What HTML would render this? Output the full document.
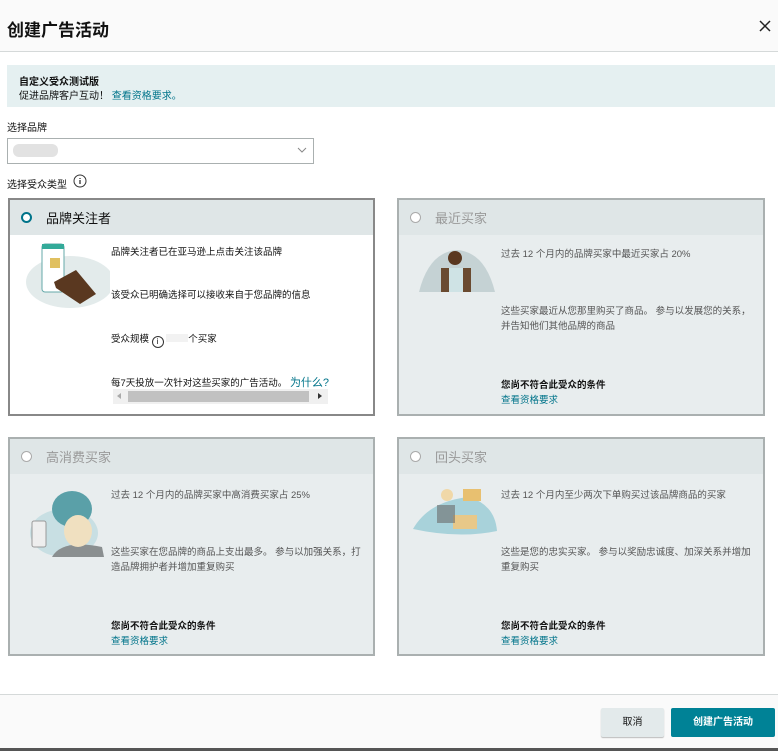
<!DOCTYPE html>
<html><head><meta charset="utf-8"><style>
*{margin:0;padding:0;box-sizing:border-box}
body{width:778px;height:751px;background:#fff;font-family:"Liberation Sans","Noto Sans CJK SC",sans-serif;color:#111;position:relative;overflow:hidden;font-size:10px}
.a{position:absolute;white-space:nowrap}
.hd{position:absolute;left:0;top:0;width:778px;height:52px;background:#fafafa;border-bottom:1px solid #d5d9d9}
.card{position:absolute;border:2px solid #aab0b0;background:#e8edee;font-size:9.5px}
.card .h{height:35px;background:#dfe6e7;position:relative}
.card .h .r{position:absolute;left:11px;top:12px;width:11px;height:11px;border:1px solid #aaa;border-radius:50%;background:#fff}
.card .h .t{position:absolute;left:36px;top:8px;font-size:13px;color:#999}
.lk{color:#00748a}
.b{font-weight:bold}
</style></head><body>
<div class="hd"></div>
<div class="a" style="left:7px;top:16px;font-size:17px;font-weight:bold;color:#111">创建广告活动</div>
<svg class="a" style="left:759px;top:20px" width="12" height="12"><path d="M1 1L11 11M11 1L1 11" stroke="#222" stroke-width="1.5"/></svg>
<div class="a" style="left:7px;top:65px;width:768px;height:42px;background:#e5f0f1"></div>
<div class="a b" style="left:19px;top:73px;font-size:10px">自定义受众测试版</div>
<div class="a" style="left:19px;top:87px;font-size:10px">促进品牌客户互动！ <span class="lk">查看资格要求。</span></div>
<div class="a" style="left:7px;top:119px;font-size:10px">选择品牌</div>
<div class="a" style="left:7px;top:138px;width:307px;height:26px;border:1px solid #aab0b0;background:#fff"></div>
<div class="a" style="left:13px;top:144px;width:45px;height:13px;background:#e2e2e2;border-radius:6px"></div>
<svg class="a" style="left:297px;top:147px" width="10" height="7"><path d="M1 1L5 5L9 1" stroke="#888" fill="none"/></svg>
<div class="a" style="left:7px;top:176px;font-size:10px">选择受众类型</div>
<svg class="a" style="left:73px;top:174px" width="14" height="14"><circle cx="7" cy="7" r="6" fill="none" stroke="#333"/><path d="M7 6v4M7 4v1" stroke="#333" stroke-width="1.3"/></svg>

<div class="card" style="left:8px;top:198px;width:367px;height:218px;background:#fff;border-color:#888">
<div class="h"><div class="r" style="border:2px solid #00748a"></div><div class="t" style="color:#111">品牌关注者</div></div>
<svg class="a" style="left:10px;top:40px" width="90" height="68"><ellipse cx="50" cy="42" rx="44" ry="26" fill="#e3ebeb"/><rect x="22" y="4" width="22" height="48" rx="3" fill="#fff" stroke="#6aa"/><rect x="22" y="4" width="22" height="5" fill="#3a9"/><rect x="30" y="18" width="10" height="10" fill="#e0c060"/><path d="M34 42L56 30L76 54L60 64L36 48Z" fill="#5a3820"/></svg>
<div class="a" style="left:101px;top:44px">品牌关注者已在亚马逊上点击关注该品牌</div>
<div class="a" style="left:101px;top:87px">该受众已明确选择可以接收来自于您品牌的信息</div>
<div class="a" style="left:101px;top:131px">受众规模 <span style="display:inline-block;width:12px;height:12px;border:1px solid #333;border-radius:50%;vertical-align:-2px;font-size:8px;text-align:center;line-height:10px">i</span> <span style="display:inline-block;width:22px;height:8px;background:#f2f2f2"></span>个买家</div>
<div class="a" style="left:101px;top:174px">每7天投放一次针对这些买家的广告活动。 <span class="lk" style="font-size:11px">为什么?</span></div>
<div class="a" style="left:103px;top:189px;width:215px;height:15px;background:#f0f0f0"></div>
<div class="a" style="left:118px;top:191px;width:181px;height:11px;background:#c1c1c1"></div>
<div class="a" style="left:107px;top:193px;width:0;height:0;border:3px solid transparent;border-right:4px solid #aaa;border-left:0"></div>
<div class="a" style="left:308px;top:193px;width:0;height:0;border:3px solid transparent;border-left:4px solid #333;border-right:0"></div>
</div>

<div class="card" style="left:397px;top:198px;width:368px;height:218px">
<div class="h"><div class="r"></div><div class="t">最近买家</div></div>
<svg class="a" style="left:10px;top:44px" width="90" height="50"><path d="M10 48Q20 8 48 6Q76 8 86 48Z" fill="#c5d2d4"/><circle cx="46" cy="14" r="7" fill="#5a3820"/><path d="M32 48L34 24L58 24L60 48Z" fill="#cfe3e5"/><rect x="32" y="24" width="8" height="24" fill="#6a4a30"/><rect x="54" y="24" width="8" height="24" fill="#6a4a30"/></svg>
<div class="a" style="left:102px;top:46px;color:#555">过去 12 个月内的品牌买家中最近买家占 20%</div>
<div class="a" style="left:102px;top:104px;color:#555;line-height:15px">这些买家最近从您那里购买了商品。 参与以发展您的关系，<br>并告知他们其他品牌的商品</div>
<div class="a b" style="left:102px;top:177px">您尚不符合此受众的条件</div>
<div class="a lk" style="left:102px;top:192px">查看资格要求</div>
</div>

<div class="card" style="left:8px;top:437px;width:367px;height:219px">
<div class="h"><div class="r"></div><div class="t">高消费买家</div></div>
<svg class="a" style="left:12px;top:44px" width="90" height="74"><ellipse cx="42" cy="50" rx="34" ry="24" fill="#c8dfe3"/><path d="M30 74Q40 56 80 64L82 74Z" fill="#8a8f90"/><ellipse cx="50" cy="26" rx="20" ry="18" fill="#5aa0a8"/><ellipse cx="56" cy="48" rx="14" ry="16" fill="#f0e0c0"/><rect x="10" y="38" width="14" height="26" rx="2" fill="#eee" stroke="#999"/></svg>
<div class="a" style="left:101px;top:48px;color:#555">过去 12 个月内的品牌买家中高消费买家占 25%</div>
<div class="a" style="left:101px;top:106px;color:#555;line-height:15px">这些买家在您品牌的商品上支出最多。 参与以加强关系，打<br>造品牌拥护者并增加重复购买</div>
<div class="a b" style="left:101px;top:179px">您尚不符合此受众的条件</div>
<div class="a lk" style="left:101px;top:194px">查看资格要求</div>
</div>

<div class="card" style="left:397px;top:437px;width:368px;height:219px">
<div class="h"><div class="r"></div><div class="t">回头买家</div></div>
<svg class="a" style="left:10px;top:46px" width="90" height="52"><path d="M4 44Q20 16 60 12Q86 20 88 46Q50 54 4 44Z" fill="#a8d2da"/><rect x="44" y="30" width="24" height="14" fill="#e8c888"/><path d="M28 20h18v18h-18z" fill="#6a6a6a" opacity=".6"/><circle cx="38" cy="10" r="6" fill="#f0d8a8"/><rect x="54" y="4" width="18" height="12" fill="#e8c070"/></svg>
<div class="a" style="left:102px;top:48px;color:#555">过去 12 个月内至少两次下单购买过该品牌商品的买家</div>
<div class="a" style="left:102px;top:106px;color:#555;line-height:15px">这些是您的忠实买家。 参与以奖励忠诚度、加深关系并增加<br>重复购买</div>
<div class="a b" style="left:102px;top:179px">您尚不符合此受众的条件</div>
<div class="a lk" style="left:102px;top:194px">查看资格要求</div>
</div>

<div class="a" style="left:0;top:694px;width:778px;height:54px;background:#fafafa;border-top:1px solid #d5d9d9"></div>
<div class="a" style="left:601px;top:708px;width:63px;height:29px;background:#e3eaeb;border-radius:2px;text-align:center;line-height:29px;font-size:10px;box-shadow:0 1px 1px #bbb">取消</div>
<div class="a" style="left:671px;top:708px;width:104px;height:29px;background:#008296;border-radius:2px;text-align:center;line-height:29px;font-size:10px;color:#fff;font-weight:bold">创建广告活动</div>
<div class="a" style="left:0;top:748px;width:778px;height:3px;background:#555"></div>
</body></html>
